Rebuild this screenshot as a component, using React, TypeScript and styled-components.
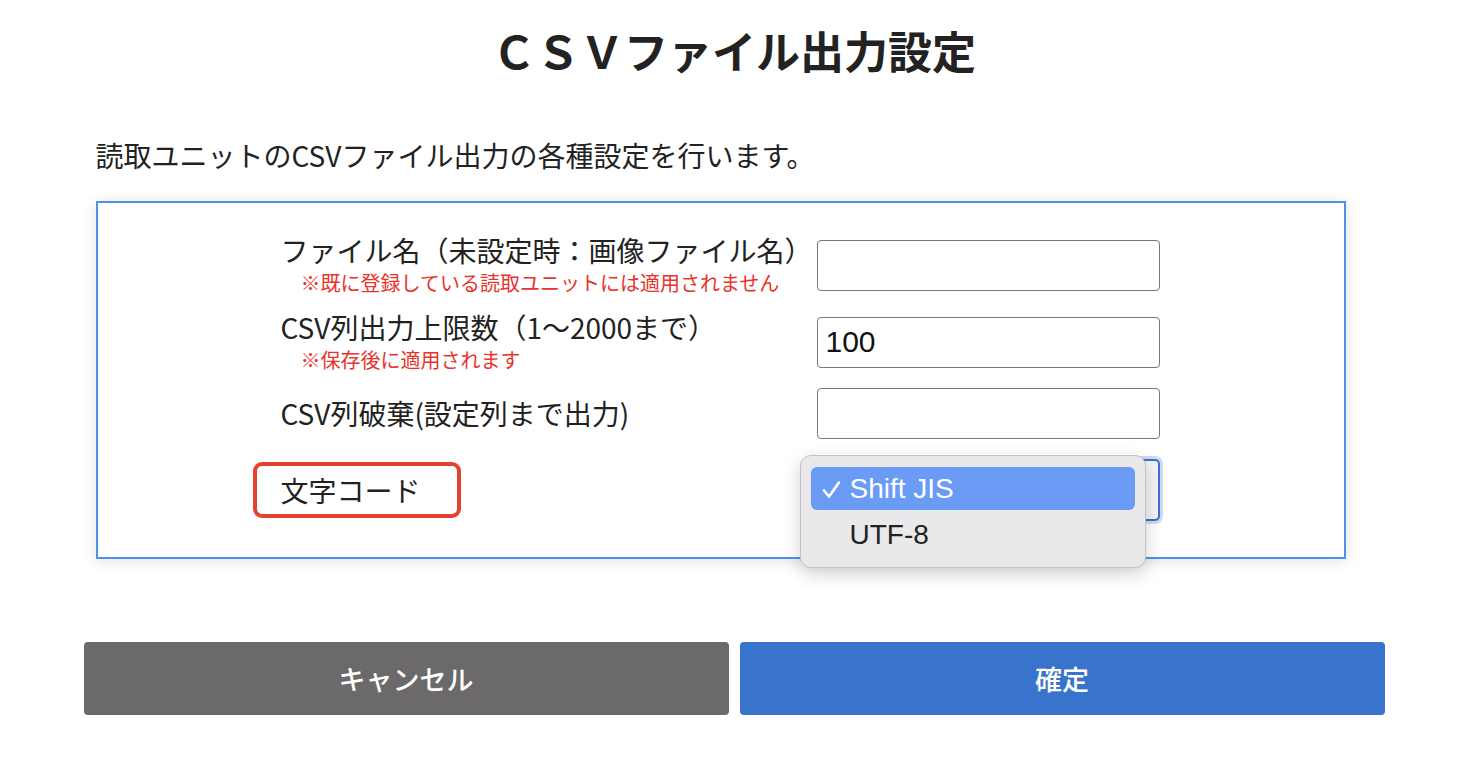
import React from "react";
import styled, { createGlobalStyle } from "styled-components";

const GlobalStyle = createGlobalStyle`
  html, body { margin: 0; padding: 0; background: #ffffff; }
  body {
    font-family: "Noto Sans CJK JP", "Noto Sans", "Liberation Sans", sans-serif;
    color: #222222;
  }
  * { box-sizing: border-box; }
`;

const Page = styled.main`
  width: 1301px;
  margin: 0 auto;
  display: flex;
  flex-direction: column;
`;

const Title = styled.h1`
  margin: 20px 0 0;
  height: 60px;
  line-height: 60px;
  text-align: center;
  font-size: 44px;
  font-weight: 700;
  color: #222222;
`;

const Description = styled.p`
  margin: 55px 0 0 12px;
  height: 40px;
  line-height: 40px;
  font-size: 28px;
  color: #222222;
`;

const Panel = styled.section`
  margin: 26px 0 0 12px;
  width: 1250px;
  border: 2px solid #4a93ee;
  box-shadow: 0 2px 14px rgba(0, 0, 0, 0.12);
  padding: 25px 0 21px 183px;
  display: flex;
  flex-direction: column;
`;

const Row = styled.div<{ $h: number }>`
  height: ${(p) => p.$h}px;
  display: grid;
  grid-template-columns: 536px 343px;
  align-items: center;
`;

const LabelBlock = styled.div`
  display: flex;
  flex-direction: column;
`;

const Label = styled.span`
  font-size: 28px;
  line-height: 36px;
  color: #222222;
  white-space: nowrap;
`;

const Note = styled.span`
  font-size: 20px;
  line-height: 30px;
  color: #e8332b;
  padding-left: 20px;
  white-space: nowrap;
`;

const Highlight = styled.span`
  align-self: flex-start;
  margin-left: -28px;
  height: 56px;
  padding: 0 36px 0 24px;
  border: 4px solid #e5422e;
  border-radius: 9px;
  display: flex;
  align-items: center;
  font-size: 28px;
  color: #222222;
`;

const TextInput = styled.input`
  width: 343px;
  height: 51px;
  border: 1.5px solid #777777;
  border-radius: 4px;
  padding: 0 8px;
  font-family: "Liberation Sans", "Noto Sans", sans-serif;
  font-size: 30px;
  color: #111111;
  background: #ffffff;
  outline: none;
`;

const SelectWrap = styled.div`
  position: relative;
  width: 343px;
  height: 62px;
`;

const SelectBox = styled.div`
  width: 343px;
  height: 62px;
  border: 2px solid #3a70cf;
  border-radius: 5px;
  box-shadow: 0 0 0 3px #cfdaf0;
  background: #f4f4f6;
`;

const Popup = styled.ul`
  position: absolute;
  left: -17px;
  top: -4px;
  width: 346px;
  height: 113px;
  margin: 0;
  padding: 11px 10px;
  list-style: none;
  background: #e9e9eb;
  border: 1px solid #c3c3c6;
  border-radius: 11px;
  box-shadow: 0 6px 18px rgba(0, 0, 0, 0.18);
  display: flex;
  flex-direction: column;
`;

const Option = styled.li<{ $selected?: boolean }>`
  height: ${(p) => (p.$selected ? 46 : 50)}px;
  padding-top: ${(p) => (p.$selected ? 2 : 4)}px;
  border-radius: 6px;
  background: ${(p) => (p.$selected ? "#6a9cf6" : "transparent")};
  color: ${(p) => (p.$selected ? "#ffffff" : "#222222")};
  display: flex;
  align-items: center;
  font-family: "Liberation Sans", "Noto Sans", sans-serif;
  font-size: 28px;
`;

const CheckSlot = styled.span`
  width: 39px;
  display: flex;
  justify-content: flex-end;
  padding-right: 9px;
`;

const Buttons = styled.div`
  margin-top: 83px;
  display: grid;
  grid-template-columns: 1fr 1fr;
  gap: 11px;
`;

const Button = styled.button<{ $primary?: boolean }>`
  height: 73px;
  border: none;
  border-radius: 4px;
  background: ${(p) => (p.$primary ? "#3874cc" : "#6b696a")};
  color: #ffffff;
  font-family: "Noto Sans CJK JP", "Noto Sans", sans-serif;
  font-size: 27px;
  font-weight: 500;
`;

const Check = () => (
  <svg width="19" height="19" viewBox="0 0 19 19" fill="none">
    <path d="M2 10.5 L7 16.5 L17 2.5" stroke="#ffffff" strokeWidth="2.6" strokeLinecap="round" strokeLinejoin="round" />
  </svg>
);

export default function App() {
  return (
    <>
      <GlobalStyle />
      <Page>
        <Title>ＣＳＶファイル出力設定</Title>
        <Description>読取ユニットのCSVファイル出力の各種設定を行います。</Description>
        <Panel>
          <Row $h={74}>
            <LabelBlock>
              <Label>ファイル名（未設定時：画像ファイル名）</Label>
              <Note>※既に登録している読取ユニットには適用されません</Note>
            </LabelBlock>
            <TextInput defaultValue="" />
          </Row>
          <Row $h={80}>
            <LabelBlock>
              <Label>CSV列出力上限数（1〜2000まで）</Label>
              <Note>※保存後に適用されます</Note>
            </LabelBlock>
            <TextInput defaultValue="100" />
          </Row>
          <Row $h={62}>
            <LabelBlock>
              <Label>CSV列破棄(設定列まで出力)</Label>
            </LabelBlock>
            <TextInput defaultValue="" />
          </Row>
          <Row $h={92}>
            <LabelBlock>
              <Highlight>文字コード</Highlight>
            </LabelBlock>
            <SelectWrap>
              <SelectBox />
              <Popup>
                <Option $selected>
                  <CheckSlot>
                    <Check />
                  </CheckSlot>
                  Shift JIS
                </Option>
                <Option>
                  <CheckSlot />
                  UTF-8
                </Option>
              </Popup>
            </SelectWrap>
          </Row>
        </Panel>
        <Buttons>
          <Button>キャンセル</Button>
          <Button $primary>確定</Button>
        </Buttons>
      </Page>
    </>
  );
}
